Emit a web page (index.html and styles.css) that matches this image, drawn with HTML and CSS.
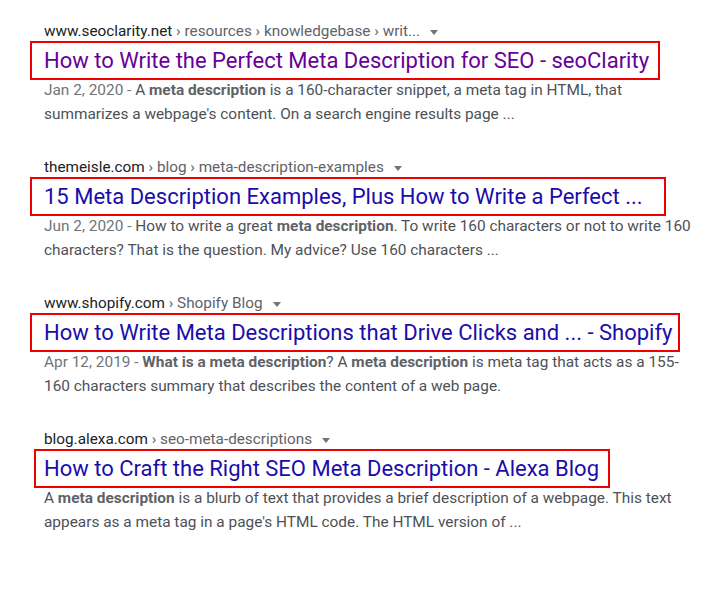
FILE: index.html
```html
<!DOCTYPE html>
<html lang="en">
<head>
<meta charset="utf-8">
<title>Meta description results</title>
<link rel="stylesheet" href="styles.css">
</head>
<body>
<main class="results">
  <div class="result">
    <div class="cite"><span class="domain">www.seoclarity.net</span><span class="crumbs"> › resources › knowledgebase › writ...</span><span class="caret"></span></div>
    <div class="box box1"><a class="title visited" href="#">How to Write the Perfect Meta Description for SEO - seoClarity</a></div>
    <p class="snippet"><span class="date">Jan 2, 2020 - </span>A <b>meta description</b> is a 160-character snippet, a meta tag in HTML, that summarizes a webpage's content. On a search engine results page ...</p>
  </div>
  <div class="result">
    <div class="cite"><span class="domain">themeisle.com</span><span class="crumbs"> › blog › meta-description-examples</span><span class="caret"></span></div>
    <div class="box box2"><a class="title" href="#">15 Meta Description Examples, Plus How to Write a Perfect ...</a></div>
    <p class="snippet"><span class="date">Jun 2, 2020 - </span>How to write a great <b>meta description</b>. To write 160 characters or not to write 160 characters? That is the question. My advice? Use 160 characters ...</p>
  </div>
  <div class="result">
    <div class="cite"><span class="domain">www.shopify.com</span><span class="crumbs"> › Shopify Blog</span><span class="caret"></span></div>
    <div class="box box3"><a class="title" href="#">How to Write Meta Descriptions that Drive Clicks and ... - Shopify</a></div>
    <p class="snippet"><span class="date">Apr 12, 2019 - </span><b>What is a meta description</b>? A <b>meta description</b> is meta tag that acts as a 155-160 characters summary that describes the content of a web page.</p>
  </div>
  <div class="result">
    <div class="cite"><span class="domain">blog.alexa.com</span><span class="crumbs"> › seo-meta-descriptions</span><span class="caret"></span></div>
    <div class="box box4"><a class="title" href="#">How to Craft the Right SEO Meta Description - Alexa Blog</a></div>
    <p class="snippet">A <b>meta description</b> is a blurb of text that provides a brief description of a webpage. This text appears as a meta tag in a page's HTML code. The HTML version of ...</p>
  </div>
</main>
</body>
</html>
```

FILE: styles.css
```css
html, body {
  margin: 0;
  padding: 0;
  background: #ffffff;
}

body {
  font-family: Roboto, "Liberation Sans", Arial, sans-serif;
  width: 726px;
  height: 595px;
  overflow: hidden;
}

.results {
  padding: 22px 0 0 44px;
  display: flex;
  flex-direction: column;
  gap: 32px;
}

.result {
  display: flex;
  flex-direction: column;
  align-items: flex-start;
}

.cite {
  font-size: 15.3px;
  line-height: 19px;
  white-space: nowrap;
  display: flex;
  align-items: center;
}

.domain {
  color: #202124;
}

.crumbs {
  color: #5f6368;
  white-space: pre;
}

.caret {
  display: inline-block;
  width: 0;
  height: 0;
  margin-left: 10px;
  margin-top: 2px;
  border-left: 4.5px solid transparent;
  border-right: 4.5px solid transparent;
  border-top: 5px solid #70757a;
}

.box {
  border: 2px solid #ee0000;
  margin-left: -14px;
  padding-left: 12px;
  box-sizing: border-box;
  height: 39px;
  display: flex;
  align-items: center;
  white-space: nowrap;
}

.box1 { width: 630px; }
.box2 { width: 636px; }
.box3 { width: 650px; }
.box4 { width: 576px; margin-left: -10px; padding-left: 8px; }

.title {
  font-size: 22px;
  line-height: 35px;
  color: #1a0dab;
  text-decoration: none;
}

.title.visited {
  color: #660099;
}

.snippet {
  margin: -2px 0 0 0;
  width: 652px;
  font-size: 15.4px;
  line-height: 24px;
  color: #4d5156;
}

.snippet b {
  color: #5f6368;
  font-weight: 700;
}

.date {
  color: #70757a;
}
```
